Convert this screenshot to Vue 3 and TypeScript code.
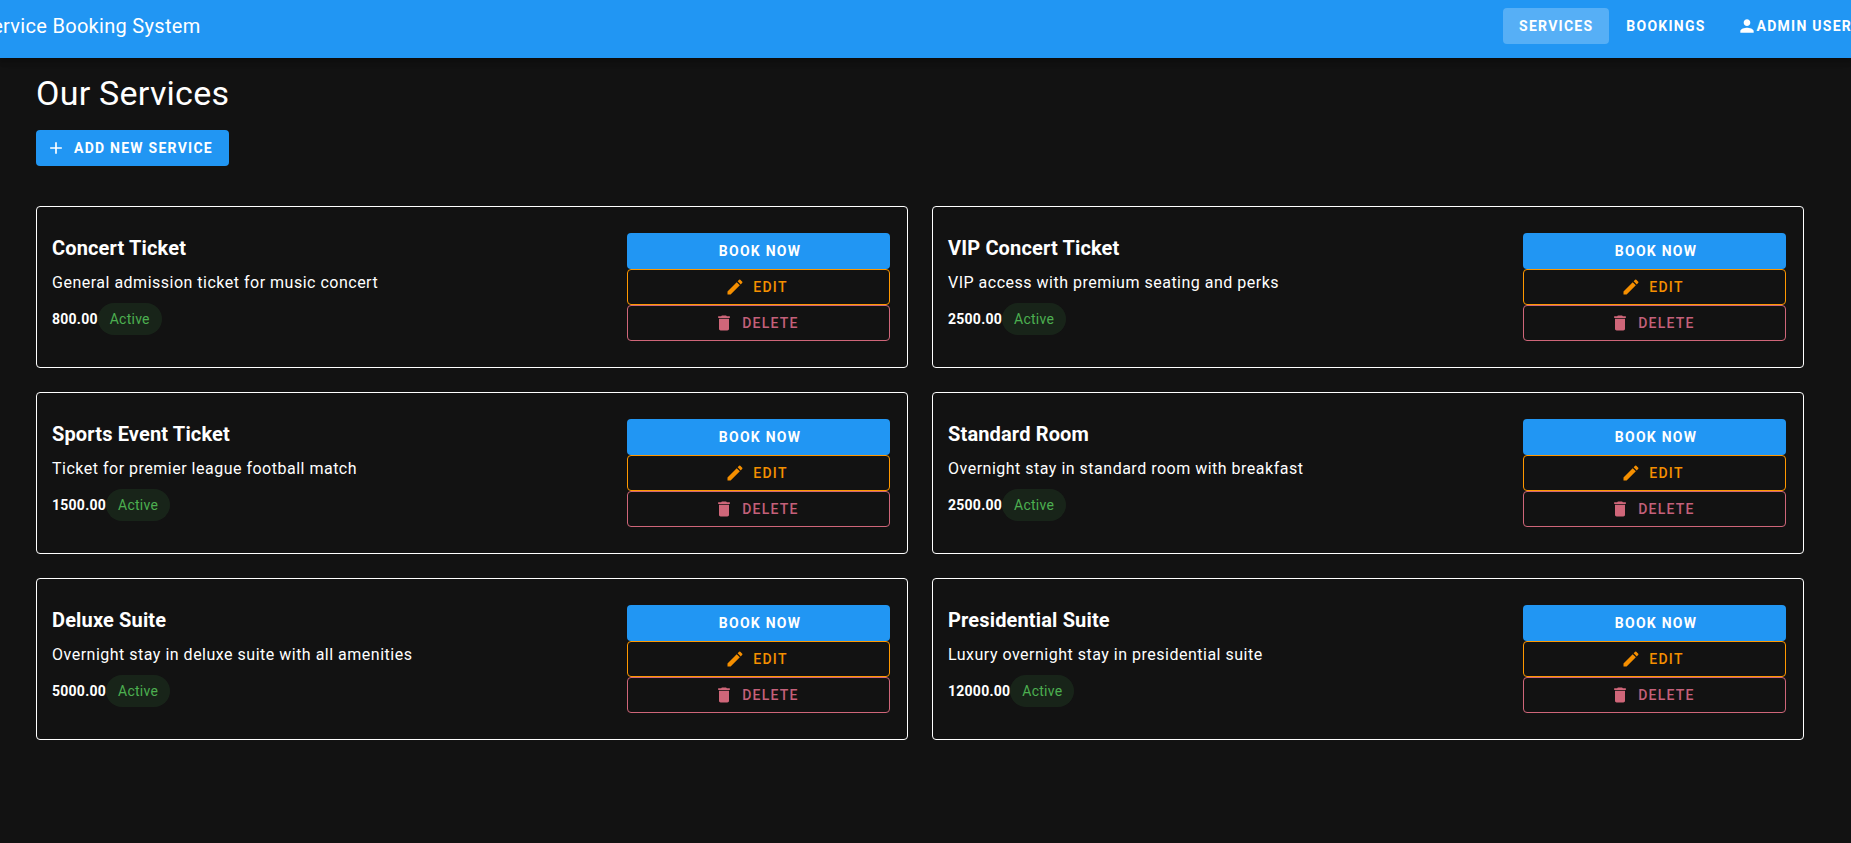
<script setup lang="ts">
interface Service { name: string; desc: string; price: string }
const services: Service[] = [
  { name: 'Concert Ticket', desc: 'General admission ticket for music concert', price: '800.00' },
  { name: 'VIP Concert Ticket', desc: 'VIP access with premium seating and perks', price: '2500.00' },
  { name: 'Sports Event Ticket', desc: 'Ticket for premier league football match', price: '1500.00' },
  { name: 'Standard Room', desc: 'Overnight stay in standard room with breakfast', price: '2500.00' },
  { name: 'Deluxe Suite', desc: 'Overnight stay in deluxe suite with all amenities', price: '5000.00' },
  { name: 'Presidential Suite', desc: 'Luxury overnight stay in presidential suite', price: '12000.00' },
]
</script>

<template>
  <div class="page">
    <header class="bar">
      <div class="brand">Service Booking System</div>
      <nav class="nav">
        <button class="nav-btn active">Services</button>
        <button class="nav-btn bookings">Bookings</button>
        <button class="nav-btn user">
          <svg class="user-icon" viewBox="0 0 24 24"><path d="M12 12c2.21 0 4-1.79 4-4s-1.79-4-4-4-4 1.79-4 4 1.79 4 4 4zm0 2c-2.67 0-8 1.34-8 4v2h16v-2c0-2.66-5.33-4-8-4z" /></svg>
          Admin User
        </button>
      </nav>
    </header>
    <main class="main">
      <h1 class="title">Our Services</h1>
      <button class="btn add">
        <svg class="icon add-icon" viewBox="0 0 24 24"><path d="M19 13h-6v6h-2v-6H5v-2h6V5h2v6h6v2z" /></svg>
        Add New Service
      </button>
      <section class="grid">
        <article v-for="s in services" :key="s.name" class="card">
          <div class="info">
            <h2 class="name">{{ s.name }}</h2>
            <p class="desc">{{ s.desc }}</p>
            <div class="meta">
              <span class="price">{{ s.price }}</span>
              <span class="chip">Active</span>
            </div>
          </div>
          <div class="actions">
            <button class="btn book">Book Now</button>
            <button class="btn outline edit">
              <svg class="icon" viewBox="0 0 24 24"><path d="M3 17.25V21h3.75L17.81 9.94l-3.75-3.75L3 17.25zM20.71 7.04c.39-.39.39-1.02 0-1.41l-2.34-2.34a.9959.9959 0 0 0-1.41 0l-1.83 1.83 3.75 3.75 1.83-1.83z" /></svg>
              Edit
            </button>
            <button class="btn outline del">
              <svg class="icon" viewBox="0 0 24 24"><path d="M6 19c0 1.1.9 2 2 2h8c1.1 0 2-.9 2-2V7H6v12zM19 4h-3.5l-1-1h-5l-1 1H5v2h14V4z" /></svg>
              Delete
            </button>
          </div>
        </article>
      </section>
    </main>
  </div>
</template>

<style>
html, body { margin: 0; background: #121212; }
</style>

<style scoped>
.page {
  width: 1851px;
  height: 843px;
  overflow: hidden;
  background: #121212;
  color: #fff;
  font-family: Roboto, "Liberation Sans", sans-serif;
}
.bar {
  height: 58px;
  box-sizing: border-box;
  padding-bottom: 6px;
  background: #2196f3;
  display: flex;
  align-items: center;
  justify-content: space-between;
  box-shadow: 0 2px 4px -1px rgba(0,0,0,.2), 0 4px 5px rgba(0,0,0,.14), 0 1px 10px rgba(0,0,0,.12);
}
.brand { font-size: 20px; font-weight: 400; letter-spacing: 0.3px; margin-left: -20px; white-space: nowrap; }
.nav { display: flex; align-items: center; margin-right: -17px; }
button { font-family: inherit; border: 0; background: none; color: inherit; cursor: pointer; }
.nav-btn {
  height: 36px;
  padding: 0 16px;
  font-size: 14px;
  font-weight: 700;
  letter-spacing: 1.25px;
  text-transform: uppercase;
  border-radius: 4px;
  display: inline-flex;
  align-items: center;
  white-space: nowrap;
}
.nav-btn.active { background: rgba(255,255,255,.24); }
.bookings { margin-left: 1px; }
.user { margin-left: -1px; }
.user-icon { width: 20px; height: 20px; fill: currentColor; }
.main { padding: 0 36px; }
.title { margin: 14px 0 0; font-size: 34px; font-weight: 400; line-height: 42px; letter-spacing: .25px; }
.btn {
  height: 36px;
  box-sizing: border-box;
  border-radius: 4px;
  font-size: 14px;
  font-weight: 700;
  letter-spacing: 1.25px;
  text-transform: uppercase;
  display: flex;
  align-items: center;
  justify-content: center;
  gap: 8px;
  white-space: nowrap;
}
.icon { width: 20px; height: 20px; fill: currentColor; margin-left: -4px; }
.add-icon { margin-left: -5px; }
.add { background: #2196f3; margin-top: 16px; padding: 0 16px 0 15px; }
.grid { display: grid; grid-template-columns: 872px 872px; gap: 24px; margin-top: 40px; }
.card {
  height: 162px;
  box-sizing: border-box;
  border: 1px solid #fff;
  border-radius: 4px;
  padding: 15px 17px 15px 15px;
  display: flex;
  align-items: center;
  justify-content: space-between;
}
.info { padding-bottom: 6px; }
.name { margin: 0; font-size: 20px; font-weight: 700; line-height: 28px; letter-spacing: .15px; }
.desc { margin: 9px 0 0; font-size: 16px; line-height: 24px; letter-spacing: .5px; }
.meta { display: flex; align-items: center; margin-top: 8px; }
.price { font-size: 14px; font-weight: 700; letter-spacing: .25px; }
.chip {
  height: 32px;
  padding: 0 12px;
  display: inline-flex;
  align-items: center;
  border-radius: 16px;
  background: rgba(76,175,80,.12);
  color: #4caf50;
  font-size: 14px;
  letter-spacing: .25px;
}
.actions { width: 263px; display: flex; flex-direction: column; }
.book { background: #2196f3; padding: 0 5px 0 8px; }
.outline { background: transparent; font-weight: 500; }
.edit { border: 1px solid #ff9800; color: #f58f00; }
.del { border: 1px solid #cf6679; color: #c4607a; }
.del .icon { fill: #cf6679; }
</style>
